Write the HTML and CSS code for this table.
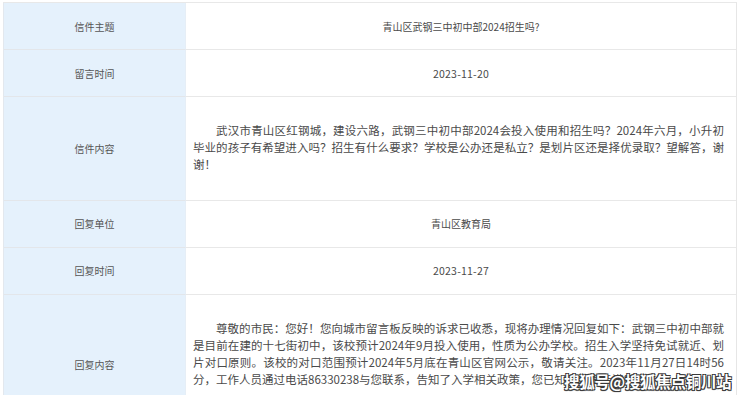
FILE: index.html
```html
<!DOCTYPE html>
<html lang="zh-CN">
<head>
<meta charset="utf-8">
<title>信件详情</title>
<link rel="stylesheet" href="styles.css">
</head>
<body>
<div class="page">
  <div class="sheet">
    <div class="label">信件主题</div>
    <div class="value center">青山区武钢三中初中部2024招生吗?</div>

    <div class="label">留言时间</div>
    <div class="value center date">2023-11-20</div>

    <div class="label">信件内容</div>
    <div class="value para">武汉市青山区红钢城，建设六路，武钢三中初中部2024会投入使用和招生吗？2024年六月，小升初毕业的孩子有希望进入吗？招生有什么要求？学校是公办还是私立？是划片区还是择优录取？望解答，谢谢！</div>

    <div class="label">回复单位</div>
    <div class="value center">青山区教育局</div>

    <div class="label">回复时间</div>
    <div class="value center date">2023-11-27</div>

    <div class="label tall">回复内容</div>
    <div class="value para tall">尊敬的市民：您好！您向城市留言板反映的诉求已收悉，现将办理情况回复如下：武钢三中初中部就是目前在建的十七街初中，该校预计2024年9月投入使用，性质为公办学校。招生入学坚持免试就近、划片对口原则。该校的对口范围预计2024年5月底在青山区官网公示，敬请关注。2023年11月27日14时56分，工作人员通过电话86330238与您联系，告知了入学相关政策，您已知晓并表示满意。</div>
  </div>
  <div class="watermark">搜狐号@搜狐焦点铜川站</div>
</div>
</body>
</html>
```

FILE: styles.css
```css
html, body {
  margin: 0;
  padding: 0;
  background: #ffffff;
}

body {
  font-family: "Noto Sans CJK SC", "Noto Sans", sans-serif;
  color: #4a4a4a;
  overflow: hidden;
}

.page {
  position: relative;
  width: 740px;
  height: 395px;
  padding: 2px 3px 0 3px;
  box-sizing: border-box;
}

.sheet {
  display: grid;
  grid-template-columns: 182px 1fr;
  border-top: 1px solid #e8e8e8;
  border-left: 1px solid #e3e8ee;
  border-right: 1px solid #e6e6e6;
}

.label {
  background: #e5f1fc;
  border-bottom: 1px solid #e3e6ea;
  border-right: 1px solid #e6eef6;
  display: flex;
  align-items: center;
  justify-content: center;
  font-size: 10px;
  color: #555555;
  min-height: 46px;
}

.value {
  border-bottom: 1px solid #e8e8e8;
  min-height: 46px;
  font-size: 10px;
  color: #4a4a4a;
}

.center {
  display: flex;
  align-items: center;
  justify-content: center;
}

.date {
  font-size: 10.5px;
  letter-spacing: 0.2px;
}

.para {
  font-size: 11.5px;
  line-height: 17.2px;
  text-indent: 2em;
  padding: 25px 12px 26px 7px;
  text-align: justify;
}

.label.tall {
  min-height: 140px;
}

.watermark {
  position: absolute;
  left: 564px;
  top: 370px;
  font-size: 15.5px;
  font-weight: 700;
  color: #ffffff;
  letter-spacing: -0.3px;
  text-shadow:
    1px 1px 0 #3a3a3a,
    -1px -1px 0 #3a3a3a,
    1px -1px 0 #3a3a3a,
    -1px 1px 0 #3a3a3a,
    0 1px 1px #222;
  white-space: nowrap;
}
```
